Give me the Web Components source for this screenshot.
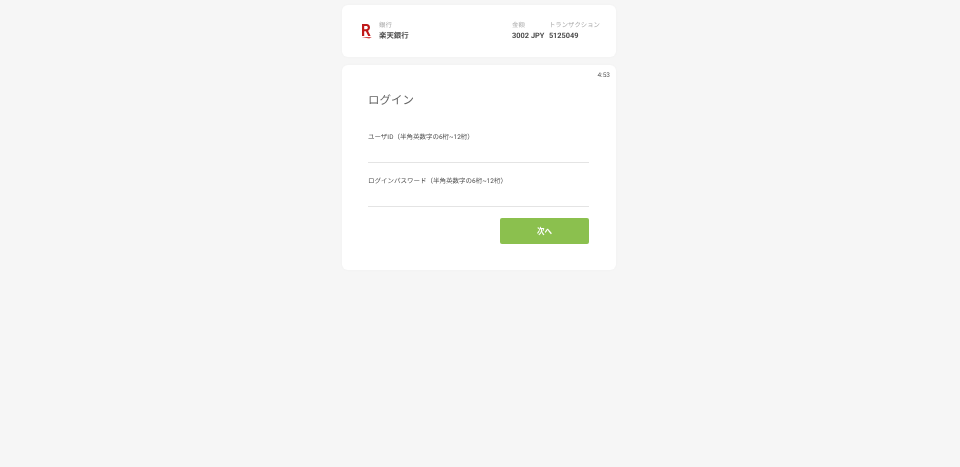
<!DOCTYPE html>
<html lang="ja">
<head>
<meta charset="utf-8">
<title>ログイン</title>
<style>
  html, body { margin: 0; height: 100%; }
  body {
    background: #f6f6f6;
    font-family: Roboto, "Noto Sans CJK JP", sans-serif;
    color: #444;
    text-rendering: geometricPrecision;
  }
</style>
</head>
<body>
<pay-page>
  <pay-summary></pay-summary>
  <login-card>
    <login-field label="ユーザID（半角英数字の6桁~12桁）"></login-field>
    <login-field label="ログインパスワード（半角英数字の6桁~12桁）"></login-field>
  </login-card>
</pay-page>

<script>
class PayPage extends HTMLElement {
  constructor() {
    super();
    this.attachShadow({ mode: "open" });
    this.shadowRoot.innerHTML = `
    <style>
      :host {
        display: flex;
        flex-direction: column;
        gap: 8px;
        width: 274px;
        margin: 0 auto;
        padding-top: 5px;
        position: relative;
        left: -1px;
        filter: blur(.45px);
      }
    </style>
    <slot></slot>`;
  }
}

class SummaryItem extends HTMLElement {
  constructor() {
    super();
    this.attachShadow({ mode: "open" });
    this.shadowRoot.innerHTML = `
    <style>
      :host { display: flex; flex-direction: column; gap: 1px; white-space: nowrap; }
      .label { font-size: 6.4px; line-height: 9px; color: #a9a9a9; }
      .value { font-size: 7.4px; line-height: 10px; font-weight: 700; color: #4a4a4a; }
    </style>
    <div class="label"></div>
    <div class="value"></div>`;
  }

  connectedCallback() {
    this.shadowRoot.querySelector(".label").textContent = this.getAttribute("label");
    this.shadowRoot.querySelector(".value").textContent = this.getAttribute("value");
  }
}

class PaySummary extends HTMLElement {
  constructor() {
    super();
    this.attachShadow({ mode: "open" });
    this.shadowRoot.innerHTML = `
    <style>
      :host {
        display: flex;
        align-items: center;
        box-sizing: border-box;
        height: 52px;
        padding: 0 16px 0 19px;
        background: #fff;
        border-radius: 6px;
        box-shadow: 0 0 3px rgba(0, 0, 0, .03);
      }
      svg { width: 11px; height: 15px; margin-right: 7px; flex: none; }
      .bank { margin-right: auto; }
      .amount { margin-right: 4.5px; }
    </style>
    <svg viewBox="0 0 11 15" aria-hidden="true">
      <path fill="#bf1a1a" d="M1 0h4.6C7.7 0 9 1.4 9 3.5c0 1.6-.8 2.8-2 3.3L9.6 12H7.2L4.9 7.2H3.2V12H1zM3.2 2v3.2h2.1c.9 0 1.5-.7 1.5-1.6S6.2 2 5.3 2z"/>
      <path fill="#d24a4a" d="M.6 12.9h10.2L8.2 14.5z"/>
    </svg>
    <summary-item class="bank" label="銀行" value="楽天銀行"></summary-item>
    <summary-item class="amount" label="金額" value="3002 JPY"></summary-item>
    <summary-item label="トランザクション" value="5125049"></summary-item>`;
  }
}

class LoginField extends HTMLElement {
  constructor() {
    super();
    this.attachShadow({ mode: "open" });
    this.shadowRoot.innerHTML = `
    <style>
      :host { display: block; height: 30px; margin-bottom: 14px; box-sizing: border-box; border-bottom: 1px solid #e4e4e4; }
      label { display: block; font-size: 6.5px; line-height: 9px; color: #4c4c4c; white-space: nowrap; }
    </style>
    <label></label>`;
  }

  connectedCallback() {
    this.shadowRoot.querySelector("label").textContent = this.getAttribute("label");
  }
}

class LoginCard extends HTMLElement {
  constructor() {
    super();
    this.attachShadow({ mode: "open" });
    this.shadowRoot.innerHTML = `
    <style>
      :host {
        display: block;
        position: relative;
        box-sizing: border-box;
        height: 205px;
        padding: 28px 27px 0 26px;
        background: #fff;
        border-radius: 6px;
        box-shadow: 0 0 3px rgba(0, 0, 0, .03);
      }
      .timer { position: absolute; top: 6px; right: 6px; font-size: 6.5px; line-height: 9px; color: #555; }
      h1 { margin: 0 0 25px; font-size: 11.5px; line-height: 15px; font-weight: 400; color: #666; }
      .fields { display: flex; flex-direction: column; }
      .actions { display: flex; justify-content: flex-end; margin-top: -3px; }
      button {
        width: 89px;
        height: 26px;
        padding: 0 0 2px;
        border: 0;
        border-radius: 2px;
        background: #8bc04e;
        color: #fff;
        font: 700 7.5px Roboto, "Noto Sans CJK JP", sans-serif;
      }
    </style>
    <div class="timer">4:53</div>
    <h1>ログイン</h1>
    <div class="fields"><slot></slot></div>
    <div class="actions"><button type="button">次へ</button></div>`;
  }
}

customElements.define("pay-page", PayPage);
customElements.define("summary-item", SummaryItem);
customElements.define("pay-summary", PaySummary);
customElements.define("login-field", LoginField);
customElements.define("login-card", LoginCard);
</script>
</body>
</html>
